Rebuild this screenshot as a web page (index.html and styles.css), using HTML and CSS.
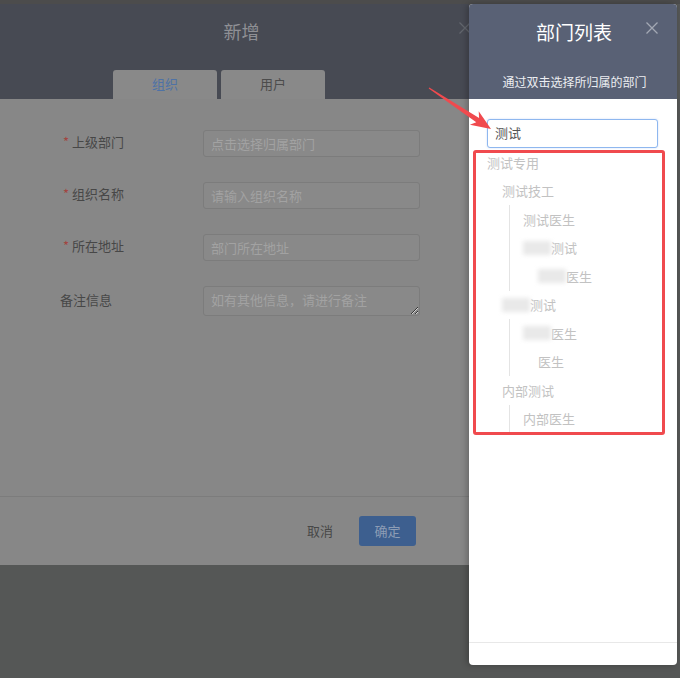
FILE: index.html
```html
<!DOCTYPE html>
<html lang="zh-CN">
<head>
    <meta charset="UTF-8">
    <title>新增组织</title>
    <link rel="stylesheet" href="styles.css">
</head>
<body>
    <div class="strip"></div>
    <div class="screen">
        <div class="modal">
            <div class="modal-head">
                <h3 class="modal-title">新增</h3>
                <svg class="modal-close" width="12" height="12" viewBox="0 0 12 12">
                    <path d="M0.5 0.5 L11.5 11.5 M11.5 0.5 L0.5 11.5" stroke="#62666e" stroke-width="1.3"/>
                </svg>
                <div class="tabs">
                    <div class="tab active">组织</div>
                    <div class="tab">用户</div>
                </div>
            </div>
            <div class="modal-body">
                <div class="row">
                    <label class="label"><i>*</i>上级部门</label>
                    <input class="field" type="text" placeholder="点击选择归属部门">
                </div>
                <div class="row">
                    <label class="label"><i>*</i>组织名称</label>
                    <input class="field" type="text" placeholder="请输入组织名称">
                </div>
                <div class="row">
                    <label class="label"><i>*</i>所在地址</label>
                    <input class="field" type="text" placeholder="部门所在地址">
                </div>
                <div class="row">
                    <label class="label">备注信息</label>
                    <textarea class="field area" placeholder="如有其他信息，请进行备注"></textarea>
                </div>
            </div>
            <div class="modal-foot">
                <button class="btn-cancel">取消</button>
                <button class="btn-ok">确定</button>
            </div>
        </div>

        <div class="drawer">
            <div class="drawer-head">
                <h3 class="drawer-title">部门列表</h3>
                <svg class="drawer-close" width="12" height="12" viewBox="0 0 12 12">
                    <path d="M0.5 0.5 L11.5 11.5 M11.5 0.5 L0.5 11.5" stroke="#a3a8b4" stroke-width="1.3"/>
                </svg>
                <p class="drawer-tip">通过双击选择所归属的部门</p>
            </div>
            <div class="drawer-body">
                <input class="search" type="text" value="测试">
                <ul class="tree">
                    <li><span class="node">测试专用</span>
                        <ul class="sub">
                            <li><span class="node">测试技工</span>
                                <ul class="sub lined">
                                    <li><span class="node">测试医生</span></li>
                                    <li><span class="node"><b class="mask"></b>测试</span>
                                        <ul class="sub">
                                            <li><span class="node"><b class="mask"></b>医生</span></li>
                                        </ul>
                                    </li>
                                </ul>
                            </li>
                            <li><span class="node"><b class="mask"></b>测试</span>
                                <ul class="sub lined">
                                    <li><span class="node"><b class="mask"></b>医生</span>
                                        <ul class="sub">
                                            <li><span class="node">医生</span></li>
                                        </ul>
                                    </li>
                                </ul>
                            </li>
                            <li><span class="node">内部测试</span>
                                <ul class="sub lined">
                                    <li><span class="node">内部医生</span></li>
                                </ul>
                            </li>
                        </ul>
                    </li>
                </ul>
                <div class="mark"></div>
            </div>
            <div class="drawer-foot"></div>
        </div>

        <!-- pointer from the form to the search box -->
        <svg class="pointer" width="680" height="200" viewBox="0 0 680 200">
            <polygon fill="#f04a4e" points="428.7,88.4 476.3,122.3 469.9,124.7 491,129 478.7,111.3 479.1,118.1 429.3,87.6"/>
        </svg>
    </div>
</body>
</html>
```

FILE: styles.css
```css
* {
    margin: 0;
    padding: 0;
    box-sizing: border-box;
}
body {
    background: #555756;
    font-family: "Noto Sans CJK SC", "Noto Sans", sans-serif;
    font-size: 13px;
    width: 680px;
    height: 678px;
    overflow: hidden;
}
.strip {
    height: 4px;
    background: #4c4c4c;
}
.screen {
    display: flex;
    align-items: flex-start;
    position: relative;
}

/* dimmed form dialog */
.modal {
    width: 469px;
    height: 561px;
    background: #878787;
    position: relative;
}
.modal-head {
    height: 95px;
    background: #474a53;
    padding-top: 15px;
}
.modal-title {
    text-align: center;
    font-size: 18px;
    font-weight: normal;
    line-height: 24px;
    color: #8f9095;
    padding-left: 14px;
}
.modal-close {
    position: absolute;
    left: 459px;
    top: 18px;
}
.tabs {
    display: flex;
    gap: 4px;
    margin-top: 27px;
    padding-left: 113px;
}
.tab {
    width: 104px;
    height: 29px;
    line-height: 28px;
    text-align: center;
    background: #898989;
    border-radius: 3px 3px 0 0;
    color: #4c4c4c;
}
.tab.active {
    color: #4e72a6;
}
.modal-body {
    height: 397px;
    padding-top: 31px;
    display: flex;
    flex-direction: column;
    gap: 25px;
}
.row {
    display: flex;
    align-items: center;
    padding-left: 60px;
}
.label {
    width: 143px;
    color: #474747;
    line-height: 18px;
    padding-bottom: 3px;
}
.label i {
    font-style: normal;
    color: #a24541;
    display: inline-block;
    width: 12px;
    padding-left: 3px;
}
.field {
    width: 217px;
    height: 27px;
    border: 1px solid #7c7c7c;
    border-radius: 3px;
    background: #898989;
    padding: 0 7px;
    font-family: inherit;
    font-size: 13px;
    outline: none;
}
.field::placeholder {
    color: #a2a2a2;
}
.area {
    height: 30px;
    padding-top: 4px;
    line-height: 18px;
    resize: vertical;
}
.modal-foot {
    border-top: 1px solid #7c7c7c;
    height: 69px;
    display: flex;
    justify-content: flex-end;
    align-items: flex-start;
    gap: 26px;
    padding: 19px 53px 0 0;
}
.btn-cancel, .btn-ok {
    height: 30px;
    font-family: inherit;
    font-size: 13px;
    border: none;
    background: none;
    padding-bottom: 2px;
}
.btn-cancel {
    color: #474747;
}
.btn-ok {
    width: 57px;
    border-radius: 3px;
    background: #3d5f8f;
    color: #8d9db5;
}

/* department drawer */
.drawer {
    width: 208px;
    height: 661px;
    background: #fff;
    border-radius: 4px;
    overflow: hidden;
    display: flex;
    flex-direction: column;
    position: relative;
    z-index: 1;
    box-shadow: -2px 0 6px rgba(0, 0, 0, 0.25);
}
.drawer-head {
    height: 95px;
    background: #596175;
    padding-top: 16px;
    text-align: center;
    position: relative;
}
.drawer-title {
    font-size: 19px;
    font-weight: normal;
    line-height: 24px;
    color: #fff;
    padding-left: 2px;
}
.drawer-close {
    position: absolute;
    right: 19px;
    top: 18px;
}
.drawer-tip {
    margin-top: 29px;
    font-size: 12px;
    line-height: 18px;
    color: #eceef2;
    padding-left: 3px;
}
.drawer-body {
    flex: 1;
    position: relative;
    padding-top: 20px;
}
.search {
    display: block;
    margin-left: 18px;
    width: 171px;
    height: 29px;
    border: 1px solid #8eb7ef;
    border-radius: 3px;
    padding: 0 7px 2px;
    font-family: inherit;
    font-size: 13px;
    color: #555;
    outline: none;
    box-shadow: 0 0 2px rgba(100, 150, 230, 0.35);
}
.tree {
    list-style: none;
    padding-left: 18px;
    margin-top: 0;
}
.tree ul {
    list-style: none;
}
.sub {
    padding-left: 15px;
}
.sub.lined {
    margin-left: 7px;
    padding-left: 13px;
    border-left: 1px solid #e4e4e4;
}
.node {
    display: flex;
    align-items: center;
    height: 28.5px;
    color: #c2c2c2;
    white-space: nowrap;
}
.mask {
    display: inline-block;
    width: 28px;
    height: 14px;
    background: #e9e9e9;
    filter: blur(2px);
}
.mark {
    position: absolute;
    left: 4px;
    top: 51px;
    width: 192px;
    height: 285px;
    border: 3px solid #f04a4e;
    border-radius: 3px;
}
.drawer-foot {
    height: 23px;
    border-top: 1px solid #e8e8e8;
}
.pointer {
    position: absolute;
    left: 0;
    top: -4px;
    z-index: 2;
}
```
